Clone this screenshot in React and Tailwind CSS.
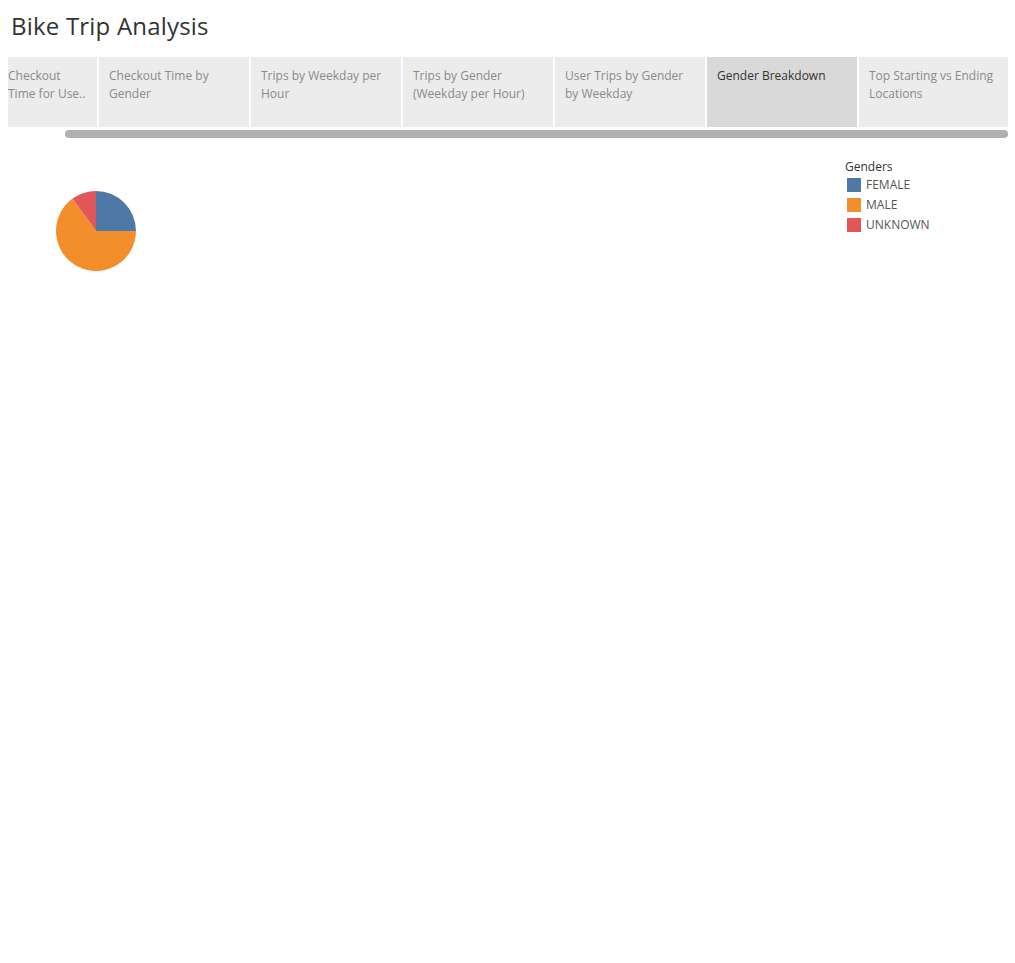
import React from 'react';

const TABS = [
  { label: 'Checkout Time for Use..', w: 'w-[89px]', pad: 'pl-0' },
  { label: 'Checkout Time by Gender' },
  { label: 'Trips by Weekday per Hour' },
  { label: 'Trips by Gender (Weekday per Hour)' },
  { label: 'User Trips by Gender by Weekday' },
  { label: 'Gender Breakdown', active: true },
  { label: 'Top Starting vs Ending Locations', w: 'w-[149px]' },
];

const LEGEND = [
  { label: 'FEMALE', color: 'bg-[#4e79a7]' },
  { label: 'MALE', color: 'bg-[#f28e2b]' },
  { label: 'UNKNOWN', color: 'bg-[#e15759]' },
];

export default function App() {
  return (
    <div className="w-[1015px] h-[963px] bg-white overflow-hidden font-['Open_Sans',sans-serif]">
      {/* Titulo */}
      <h1 className="h-[57px] pl-[11px] pt-[10px] text-[24px] leading-[32px] text-[#333] tracking-[0.2px]">
        Bike Trip Analysis
      </h1>

      {/* Pestañas */}
      <div className="flex gap-[2px] pl-[8px] w-[1008px] overflow-hidden">
        {TABS.map((t) => (
          <div key={t.label}
            className={`${t.w || 'w-[150px]'} shrink-0 h-[70px] ${t.pad || 'pl-[10px]'} pr-[8px] pt-[10px]
                        text-[12px] leading-[18px]
                        ${t.active ? 'bg-[#d9d9d9] text-[#333]' : 'bg-[#ececec] text-[#8a8a8a]'}`}>
            {t.label}
          </div>
        ))}
      </div>
      <div className="mt-[3px] ml-[65px] w-[943px] h-[8px] rounded-full bg-[#b0b0b0]" />

      {/* Grafico + leyenda */}
      <div className="flex justify-between">
        <svg width="80" height="80" viewBox="-40 -40 80 80" className="ml-[56px] mt-[53px]">
          <path d="M0,-40 A40,40 0 0 1 40,0 L0,0 Z" fill="#4e79a7" />
          <path d="M40,0 A40,40 0 1 1 -23.5,-32.4 L0,0 Z" fill="#f28e2b" />
          <path d="M-23.5,-32.4 A40,40 0 0 1 0,-40 L0,0 Z" fill="#e15759" />
        </svg>
        <div className="w-[170px] pt-[20px]">
          <p className="text-[12px] leading-[18px] text-[#333]">Genders</p>
          <div className="flex flex-col gap-[6px] mt-[2px] pl-[2px]">
            {LEGEND.map((l) => (
              <div key={l.label} className="flex items-center gap-[5px] h-[14px]">
                <span className={`w-[14px] h-[14px] ${l.color}`} />
                <span className="text-[12px] leading-[14px] text-[#555]">{l.label}</span>
              </div>
            ))}
          </div>
        </div>
      </div>
    </div>
  );
}
